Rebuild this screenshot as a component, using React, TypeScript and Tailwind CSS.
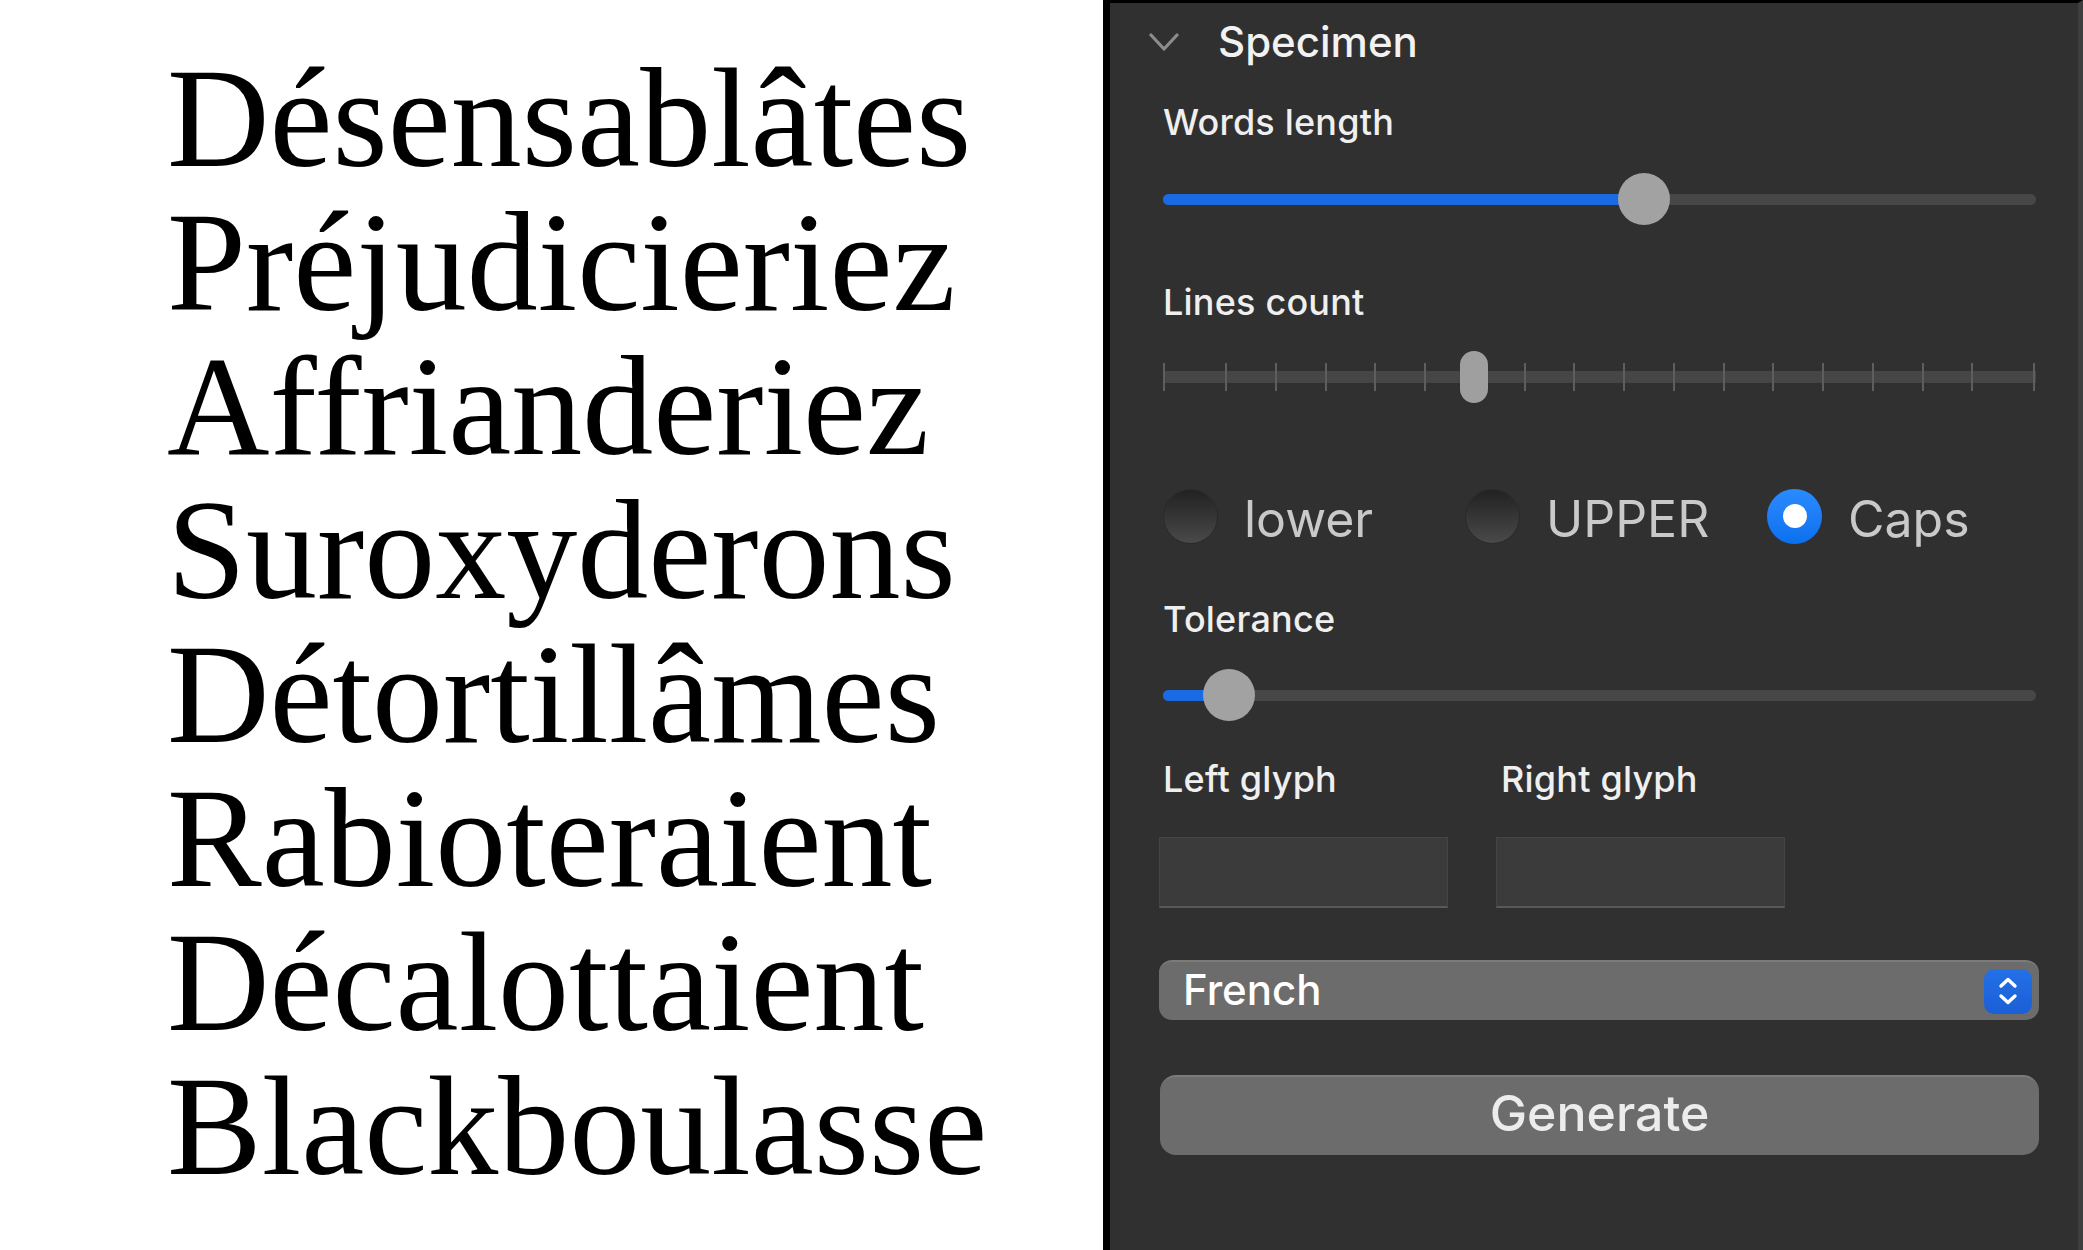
import React from 'react';

const words = [
  'Désensablâtes',
  'Préjudicieriez',
  'Affrianderiez',
  'Suroxyderons',
  'Détortillâmes',
  'Rabioteraient',
  'Décalottaient',
  'Blackboulasse',
];

// tick offsets along the lines-count track (px from the track start)
const ticks = [1, ...Array.from({ length: 16 }, (_, i) => 63 + i * 49.75), 871];

function Label({ children }: { children: React.ReactNode }) {
  return <div className="text-[36px] leading-[36px] font-medium text-[#efefef] tracking-[0.2px]">{children}</div>;
}

function Slider({ value }: { value: number }) {
  // value: thumb centre in px from the track start
  return (
    <div className="relative flex items-center h-[52px] w-[873px]">
      <div className="h-[11px] w-full rounded-full bg-[#474747] overflow-hidden">
        <div className="h-full bg-[#1a6ae4]" style={{ width: value }} />
      </div>
      <div className="absolute top-0 h-[52px] w-[52px] rounded-full bg-[#a2a2a2]" style={{ left: value - 26 }} />
    </div>
  );
}

function TickSlider({ value }: { value: number }) {
  return (
    <div className="relative flex items-center h-[52px] w-[873px]">
      <div className="h-[12px] w-full bg-[#464646]" />
      {ticks.map((t, i) => (
        <div key={i} className="absolute top-[12px] h-[28px] w-[2px] bg-[#5e5e5e]" style={{ left: t - 1 }} />
      ))}
      <div className="absolute top-0 h-[52px] w-[28px] rounded-full bg-[#9f9f9f]" style={{ left: value - 14 }} />
    </div>
  );
}

function Radio({ label, checked }: { label: string; checked?: boolean }) {
  return (
    <div className="flex items-center gap-[26px] w-[302px]">
      {checked ? (
        <div className="h-[55px] w-[55px] rounded-full bg-gradient-to-b from-[#2a8bff] to-[#0a70ee] flex items-center justify-center">
          <div className="h-[24px] w-[24px] rounded-full bg-white" />
        </div>
      ) : (
        <div className="h-[55px] w-[55px] rounded-full bg-gradient-to-b from-[#222222] to-[#4a4a4a] border border-[#2a2a2a]" />
      )}
      <span className="pt-[6px] text-[50px] leading-[56px] text-[#c9c9c9]">{label}</span>
    </div>
  );
}

export default function App() {
  return (
    <div className="flex h-[1250px] w-[2083px] overflow-hidden font-['Inter',sans-serif]">
      {/* Specimen preview */}
      <div className="w-[1103px] bg-white pl-[167px] pt-[46px]">
        {words.map((w) => (
          <div key={w} className="font-['Liberation_Serif',serif] text-[142px] leading-[144px] text-black">
            {w}
          </div>
        ))}
      </div>

      {/* Settings panel */}
      <div className="flex-1 bg-[#303030] border-l-[7px] border-l-black border-t-[3px] border-t-black border-r-[5px] border-r-[#3e3e3e] pl-[53px] flex flex-col">
        <div className="h-[77px] flex items-center">
          <svg width="30" height="18" viewBox="0 0 30 18" className="-ml-[14px]">
            <path d="M2 2 L15 16 L28 2" fill="none" stroke="#8c8c8c" strokeWidth="3.2" strokeLinecap="round" strokeLinejoin="round" />
          </svg>
          <span className="ml-[39px] text-[42px] leading-[42px] font-medium text-[#f2f2f2]">Specimen</span>
        </div>

        <div className="mt-[24px]">
          <Label>Words length</Label>
        </div>
        <div className="mt-[33px]">
          <Slider value={481} />
        </div>

        <div className="mt-[59px]">
          <Label>Lines count</Label>
        </div>
        <div className="mt-[31px]">
          <TickSlider value={311} />
        </div>

        <div className="mt-[85px] h-[56px] flex items-center">
          <Radio label="lower" />
          <Radio label="UPPER" />
          <Radio label="Caps" checked />
        </div>

        <div className="mt-[57px]">
          <Label>Tolerance</Label>
        </div>
        <div className="mt-[32px]">
          <Slider value={66} />
        </div>

        <div className="mt-[40px] flex">
          <div className="w-[338px]">
            <Label>Left glyph</Label>
          </div>
          <Label>Right glyph</Label>
        </div>

        <div className="mt-[40px] -ml-[4px] flex gap-[48px]">
          <div className="h-[71px] w-[289px] bg-[#3b3b3b] border border-[#444444] border-b-2 border-b-[#595959]" />
          <div className="h-[71px] w-[289px] bg-[#3b3b3b] border border-[#444444] border-b-2 border-b-[#595959]" />
        </div>

        <div className="mt-[52px] -ml-[4px] h-[60px] w-[880px] rounded-[13px] bg-[#6c6c6c] border-t-2 border-t-[#7b7b7b] flex items-center justify-between pl-[24px] pr-[7px]">
          <span className="text-[42px] leading-[42px] font-medium text-white -mt-[2px]">French</span>
          <div className="h-[45px] w-[48px] rounded-[10px] bg-gradient-to-b from-[#2470e6] to-[#1a5fd6] flex items-center justify-center">
            <svg width="24" height="32" viewBox="0 0 24 32">
              <path d="M5 11 L12 4.5 L19 11" fill="none" stroke="white" strokeWidth="3.4" strokeLinecap="round" strokeLinejoin="round" />
              <path d="M5 21 L12 27.5 L19 21" fill="none" stroke="white" strokeWidth="3.4" strokeLinecap="round" strokeLinejoin="round" />
            </svg>
          </div>
        </div>

        <button className="mt-[55px] -ml-[3px] h-[80px] w-[879px] rounded-[16px] bg-[#6c6c6c] border-t-2 border-t-[#7b7b7b] text-[50px] leading-[50px] font-medium text-[#ececec] flex items-center justify-center pb-[6px]">
          Generate
        </button>
      </div>
    </div>
  );
}
